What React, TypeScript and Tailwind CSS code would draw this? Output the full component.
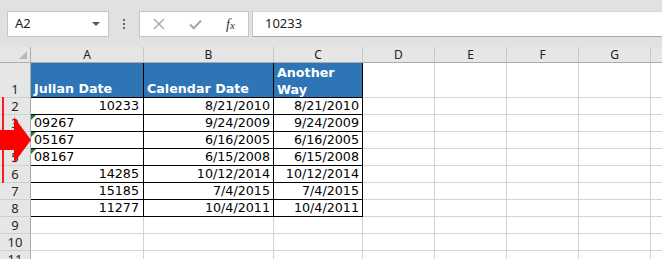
import React from "react";

const cols = [
  { l: "A", w: 113 },
  { l: "B", w: 130 },
  { l: "C", w: 89 },
  { l: "D", w: 72 },
  { l: "E", w: 72 },
  { l: "F", w: 72 },
  { l: "G", w: 72 },
  { l: "", w: 40 },
];

type Row = { a: string; aText?: boolean; b: string; c: string };
const data: Row[] = [
  { a: "10233", b: "8/21/2010", c: "8/21/2010" },
  { a: "09267", aText: true, b: "9/24/2009", c: "9/24/2009" },
  { a: "05167", aText: true, b: "6/16/2005", c: "6/16/2005" },
  { a: "08167", aText: true, b: "6/15/2008", c: "6/15/2008" },
  { a: "14285", b: "10/12/2014", c: "10/12/2014" },
  { a: "15185", b: "7/4/2015", c: "7/4/2015" },
  { a: "11277", b: "10/4/2011", c: "10/4/2011" },
];

const cellFont = { fontFamily: '"DejaVu Sans", sans-serif' };
const uiFont = { fontFamily: '"Noto Sans", "Open Sans", sans-serif' };

function RowHeader({ n, h }: { n: number; h: string }) {
  return (
    <div
      className={`w-[31px] shrink-0 ${h} bg-[#e6e6e6] border-r border-r-[#ababab] border-b border-b-[#d0d0d0] flex items-end justify-center text-[13px] leading-[16px] text-[#262626]`}
      style={uiFont}
    >
      {n}
    </div>
  );
}

export default function App() {
  return (
    <div className="relative w-[662px] h-[259px] overflow-hidden bg-[#e1e1e1]">
      {/* formula bar */}
      <div className="h-[47px] pt-[11px] flex items-start" style={uiFont}>
        <div className="ml-[7px] w-[102px] h-[26px] bg-white border border-[#c6c6c6] flex items-center justify-between pl-[7px] pr-[8px]">
          <span className="text-[13px] text-[#222]">A2</span>
          <svg width="8" height="5" viewBox="0 0 8 5">
            <path d="M0 0 L8 0 L4 4 Z" fill="#555" />
          </svg>
        </div>
        <div className="w-[30px] h-[26px] flex flex-col items-center justify-center gap-[2px]">
          <div className="w-[2px] h-[2px] bg-[#666]" />
          <div className="w-[2px] h-[2px] bg-[#666]" />
          <div className="w-[2px] h-[2px] bg-[#666]" />
        </div>
        <div className="w-[110px] h-[26px] bg-white border border-[#c6c6c6] flex items-center">
          <div className="w-[37px] flex justify-center">
            <svg width="12" height="12" viewBox="0 0 12 12">
              <path d="M1 1 L11 11 M11 1 L1 11" stroke="#a6a6a6" strokeWidth="1.3" />
            </svg>
          </div>
          <div className="w-[36px] flex justify-center">
            <svg width="13" height="11" viewBox="0 0 13 11">
              <path d="M1 5.5 L4.8 9.3 L12 1.5" stroke="#a6a6a6" strokeWidth="2" fill="none" />
            </svg>
          </div>
          <div className="w-[35px] flex justify-center">
            <span
              className="italic text-[14px] text-[#333]"
              style={{ fontFamily: '"Liberation Serif", serif' }}
            >
              f<span className="text-[11px]">x</span>
            </span>
          </div>
        </div>
        <div className="ml-[3px] flex-1 h-[26px] bg-white border-t border-t-[#d8d8d8] border-l border-l-[#c6c6c6] border-b border-b-[#a8a8a8] flex items-center pl-[12px]">
          <span className="text-[13px] text-[#222]">10233</span>
        </div>
      </div>

      {/* column headers */}
      <div className="flex h-[16px]">
        <div className="relative w-[31px] shrink-0 h-[16px] bg-[#e6e6e6] border-r border-r-[#ababab] border-b border-b-[#ababab]">
          <svg className="absolute right-[3px] bottom-[3px]" width="8" height="8" viewBox="0 0 8 8">
            <path d="M8 0 L8 8 L0 8 Z" fill="#b8b8b8" />
          </svg>
        </div>
        {cols.map((c, i) => (
          <div
            key={i}
            className="shrink-0 h-[16px] bg-[#e6e6e6] border-r border-r-[#c8c8c8] border-b border-b-[#ababab] flex items-center justify-center text-[12px] text-[#222]"
            style={{ width: c.w, ...uiFont }}
          >
            {c.l}
          </div>
        ))}
      </div>

      {/* row 1 */}
      <div className="flex h-[35px] bg-white" style={cellFont}>
        <RowHeader n={1} h="h-[35px]" />
        <div className="w-[113px] shrink-0 h-[35px] bg-[#2e75b6] border-r border-b border-black flex items-end px-[3px] text-white font-bold text-[12.7px] leading-[16px]">
          Julian Date
        </div>
        <div className="w-[130px] shrink-0 h-[35px] bg-[#2e75b6] border-r border-b border-black flex items-end px-[3px] text-white font-bold text-[12.7px] leading-[16px]">
          Calendar Date
        </div>
        <div className="w-[89px] shrink-0 h-[35px] bg-[#2e75b6] border-r border-b border-black flex items-end px-[3px] text-white font-bold text-[12.7px] leading-[17px]">
          <span className="mb-[-1px]">
            Another
            <br />
            Way
          </span>
        </div>
        {cols.slice(3).map((c, i) => (
          <div
            key={i}
            className="shrink-0 h-[35px] border-r border-b border-[#d4d4d4]"
            style={{ width: c.w }}
          />
        ))}
      </div>

      {/* data rows */}
      {data.map((r, idx) => (
        <div key={idx} className="flex h-[17px] bg-white text-[12.7px] leading-[15px] text-black" style={cellFont}>
          <RowHeader n={idx + 2} h="h-[17px]" />
          <div
            className={`relative w-[113px] shrink-0 h-[17px] border-r border-b border-black flex items-end pb-[1px] ${
              r.aText ? "justify-start pl-[3px]" : "justify-end pr-[4px]"
            }`}
          >
            {r.aText && (
              <svg className="absolute left-0 top-0" width="5" height="5" viewBox="0 0 5 5">
                <path d="M0 0 L5 0 L0 5 Z" fill="#1e7b34" />
              </svg>
            )}
            {r.a}
          </div>
          <div className="w-[130px] shrink-0 h-[17px] border-r border-b border-black flex items-end justify-end pr-[3px] pb-[1px]">
            {r.b}
          </div>
          <div className="w-[89px] shrink-0 h-[17px] border-r border-b border-black flex items-end justify-end pr-[3px] pb-[1px]">
            {r.c}
          </div>
          {cols.slice(3).map((c, i) => (
            <div
              key={i}
              className="shrink-0 h-[17px] border-r border-b border-[#d4d4d4]"
              style={{ width: c.w }}
            />
          ))}
        </div>
      ))}

      {/* empty rows */}
      {[9, 10, 11].map((n) => (
        <div key={n} className="flex h-[17px] bg-white">
          <RowHeader n={n} h="h-[17px]" />
          {cols.map((c, i) => (
            <div
              key={i}
              className="shrink-0 h-[17px] border-r border-b border-[#d4d4d4]"
              style={{ width: c.w }}
            />
          ))}
        </div>
      ))}

      {/* red marker line */}
      <div className="absolute left-[2px] top-[97px] w-[2px] h-[86px] bg-[#ff1a1a]" />
      {/* red arrow */}
      <svg className="absolute left-0 top-[117px]" width="32" height="46" viewBox="0 0 32 46">
        <path d="M0 13 L14 13 L14 0 L31 23 L14 46 L14 33 L0 33 Z" fill="#ff0000" />
      </svg>
    </div>
  );
}
